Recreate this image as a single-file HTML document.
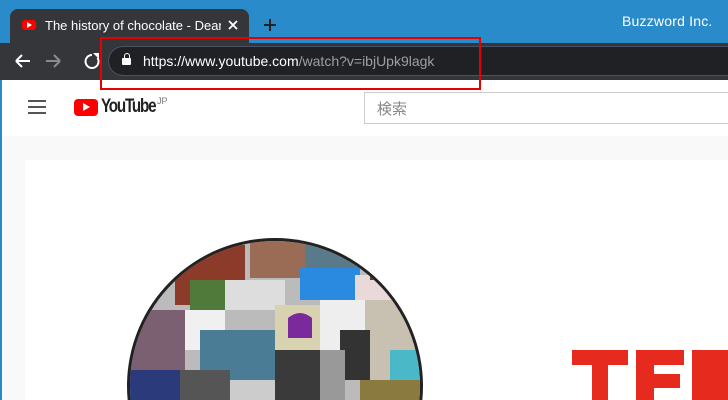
<!DOCTYPE html>
<html><head><meta charset="utf-8"><style>
*{margin:0;padding:0;box-sizing:border-box}
html,body{width:728px;height:400px;overflow:hidden}
body{position:relative;background:#f9f9f9;font-family:"Liberation Sans","Noto Sans CJK JP",sans-serif}
.abs{position:absolute}
</style></head><body>
<div class="abs" style="left:0;top:0;width:728px;height:44px;background:#2a8bcb"></div>
<div class="abs" style="left:622px;top:13px;color:#fff;font-size:14px;letter-spacing:0.2px">Buzzword Inc.</div>
<div class="abs" style="left:10px;top:9px;width:239px;height:36px;background:#35363a;border-radius:8px 8px 0 0"></div>
<div class="abs" style="left:22px;top:20px;width:14px;height:10px;background:#f00;border-radius:3px"></div>
<div class="abs" style="left:27px;top:22px;width:0;height:0;border-left:5px solid #fff;border-top:3px solid transparent;border-bottom:3px solid transparent"></div>
<div class="abs" style="left:45px;top:18px;width:176px;height:18px;overflow:hidden;white-space:nowrap;color:#fff;font-size:13px">The history of chocolate - Deanna</div>
<svg class="abs" style="left:228px;top:20px" width="10" height="10"><path d="M1 1l8 8M9 1l-8 8" stroke="#fff" stroke-width="1.8"/></svg>
<svg class="abs" style="left:264px;top:19px" width="12" height="12"><path d="M6 0v12M0 6h12" stroke="#222" stroke-width="2"/></svg>
<div class="abs" style="left:0;top:43px;width:728px;height:37px;background:#35363a"></div>
<svg class="abs" style="left:12px;top:51px" width="90" height="20" viewBox="0 0 90 20">
<path d="M4 10h14M4 10l6-6M4 10l6 6" stroke="#fff" stroke-width="2" fill="none"/>
<path d="M34 10h14M48 10l-6-6M48 10l-6 6" stroke="#8a8b8d" stroke-width="2" fill="none"/>
<path d="M80 4a6.5 6.5 0 1 0 5.5 3" stroke="#fff" stroke-width="2" fill="none"/><path d="M81 2l6 0 0 6z" fill="#fff"/>
</svg>
<div class="abs" style="left:108px;top:46px;width:622px;height:30px;background:#202124;border:1px solid #4a5162;border-radius:15px 0 0 15px;border-right:none"></div>
<div class="abs" style="left:122px;top:58px;width:9px;height:7px;background:#fff;border-radius:1px"></div>
<div class="abs" style="left:123.5px;top:53px;width:6px;height:7px;border:1.5px solid #fff;border-radius:3px 3px 0 0"></div>
<div class="abs" style="left:143px;top:53px;font-size:14px;color:#fff;white-space:nowrap">https://www.youtube.com<span style="color:#9aa0a6">/watch?v=ibjUpk9lagk</span></div>
<div class="abs" style="left:0;top:80px;width:728px;height:56px;background:#fff"></div>
<div class="abs" style="left:0;top:80px;width:2px;height:320px;background:#2a8bcb"></div>
<div class="abs" style="left:28px;top:100px;width:18px;height:2px;background:#555;box-shadow:0 6px 0 #555,0 12px 0 #555"></div>
<div class="abs" style="left:74px;top:99px;width:24px;height:17px;background:#f00;border-radius:4px"></div>
<div class="abs" style="left:83px;top:103px;width:0;height:0;border-left:7px solid #fff;border-top:4.5px solid transparent;border-bottom:4.5px solid transparent"></div>
<div class="abs" style="left:101px;top:96px;font-size:19px;font-weight:bold;color:#212121;letter-spacing:-1.5px;transform:scaleX(0.8);transform-origin:left">YouTube</div>
<div class="abs" style="left:157px;top:96px;font-size:9px;color:#777">JP</div>
<div class="abs" style="left:364px;top:92px;width:370px;height:32px;background:#fff;border:1px solid #ccc"></div>
<div class="abs" style="left:377px;top:98px;font-size:15px;color:#888">検索</div>
<div class="abs" style="left:100px;top:37px;width:381px;height:53px;border:2px solid #e60000"></div>
<div class="abs" style="left:25px;top:160px;width:703px;height:240px;background:#fff"></div>
<svg class="abs" style="left:0;top:0" width="728" height="400">
<defs><clipPath id="c"><circle cx="275" cy="386" r="145"/></clipPath></defs>
<circle cx="275" cy="386" r="148" fill="#222"/>
<g clip-path="url(#c)">
<rect x="100" y="230" width="400" height="200" fill="#bbb"/>
<rect x="175" y="245" width="70" height="60" fill="#8c3a2a"/>
<rect x="190" y="280" width="40" height="30" fill="#4f7a3a"/>
<rect x="250" y="238" width="55" height="40" fill="#9a6b55"/>
<rect x="305" y="238" width="70" height="30" fill="#5a7a8a"/>
<rect x="300" y="268" width="60" height="32" fill="#2a8ae0"/>
<rect x="355" y="275" width="40" height="30" fill="#e9d9d9"/>
<rect x="370" y="245" width="60" height="35" fill="#444"/>
<rect x="225" y="280" width="60" height="30" fill="#ddd"/>
<rect x="275" y="305" width="50" height="45" fill="#d9d2b0"/>
<path d="M288 318q12-10 24 0v20h-24z" fill="#7a2a9a"/>
<rect x="320" y="300" width="45" height="50" fill="#eee"/>
<rect x="125" y="310" width="60" height="60" fill="#7a6070"/>
<rect x="185" y="310" width="40" height="40" fill="#f0f0f0"/>
<rect x="200" y="330" width="75" height="50" fill="#4a7d95"/>
<rect x="365" y="300" width="50" height="80" fill="#c8c0b0"/>
<rect x="340" y="330" width="30" height="50" fill="#333"/>
<rect x="275" y="350" width="50" height="50" fill="#3a3a3a"/>
<rect x="320" y="350" width="25" height="50" fill="#999"/>
<rect x="100" y="370" width="80" height="40" fill="#2a3a7a"/>
<rect x="180" y="370" width="50" height="30" fill="#555"/>
<rect x="230" y="380" width="45" height="20" fill="#ccc"/>
<rect x="390" y="350" width="30" height="30" fill="#4bb8c8"/>
<rect x="360" y="380" width="60" height="20" fill="#8a7a40"/>
</g>
<path d="M572 350h56v15h-20v35h-16v-35h-20zM636 350h48v15h-30v9h26v14h-26v12h-18z" fill="#e62b1e"/>
<rect x="692" y="350" width="36" height="50" fill="#e62b1e"/>
</svg>
</body></html>
